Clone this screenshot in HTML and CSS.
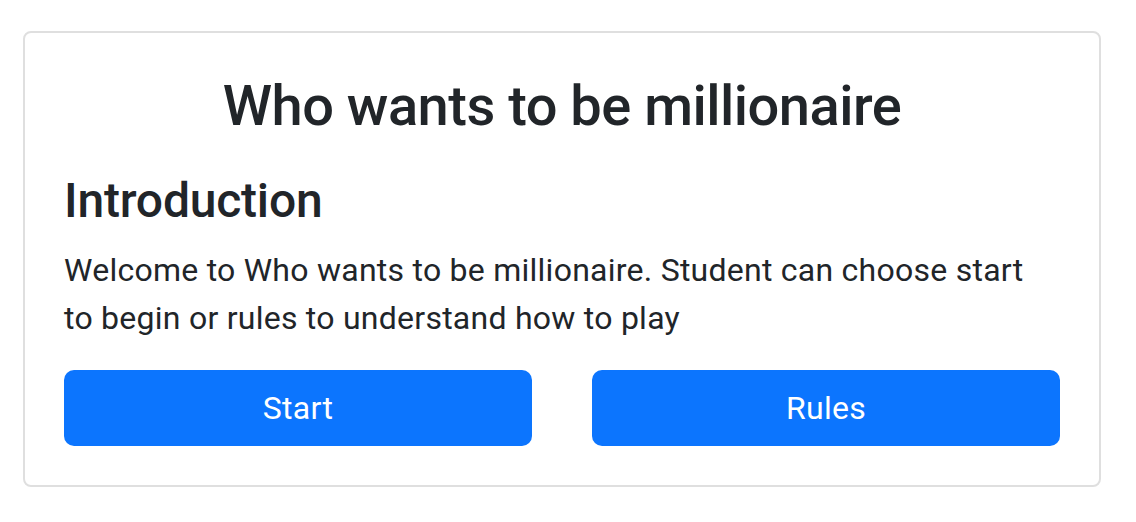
FILE: index.html
```html
<!DOCTYPE html>
<html lang="en">
<head>
<meta charset="utf-8">
<title>Who wants to be millionaire</title>
<link rel="stylesheet" href="styles.css">
</head>
<body>
  <div class="card">
    <div class="card-body">
      <h3 class="title">Who wants to be millionaire</h3>
      <h4 class="subtitle">Introduction</h4>
      <p class="intro">Welcome to Who wants to be millionaire. Student can choose start to begin or rules to understand how to play</p>
      <div class="actions">
        <button class="btn" type="button">Start</button>
        <button class="btn" type="button">Rules</button>
      </div>
    </div>
  </div>
</body>
</html>
```
FILE: styles.css
```css
html, body {
  margin: 0;
  padding: 0;
  background: #ffffff;
}
body {
  font-family: Roboto, Inter, "Noto Sans", sans-serif;
  color: #212529;
  padding: 31px 35px 0 23px;
}
.card {
  border: 2px solid #dfdfdf;
  border-radius: 8px;
  background: #fff;
}
.card-body {
  padding: 40px 39px 39px 39px;
}
.title {
  margin: 0 0 32px 0;
  font-size: 56px;
  line-height: 67px;
  font-weight: 500;
  letter-spacing: -0.5px;
  text-align: center;
}
.subtitle {
  margin: 0 0 16px 0;
  font-size: 48px;
  line-height: 58px;
  font-weight: 500;
  letter-spacing: -0.2px;
}
.intro {
  max-width: 980px;
  margin: 0 0 28px 0;
  font-size: 32px;
  line-height: 48px;
  font-weight: 400;
  letter-spacing: 0.25px;
}
.actions {
  display: grid;
  grid-template-columns: 1fr 1fr;
  column-gap: 60px;
}
.btn {
  height: 76px;
  border: 0;
  border-radius: 10px;
  background: #0c75fe;
  color: #fff;
  font-family: inherit;
  font-size: 32px;
  font-weight: 400;
  letter-spacing: 0.3px;
  cursor: pointer;
}
```
